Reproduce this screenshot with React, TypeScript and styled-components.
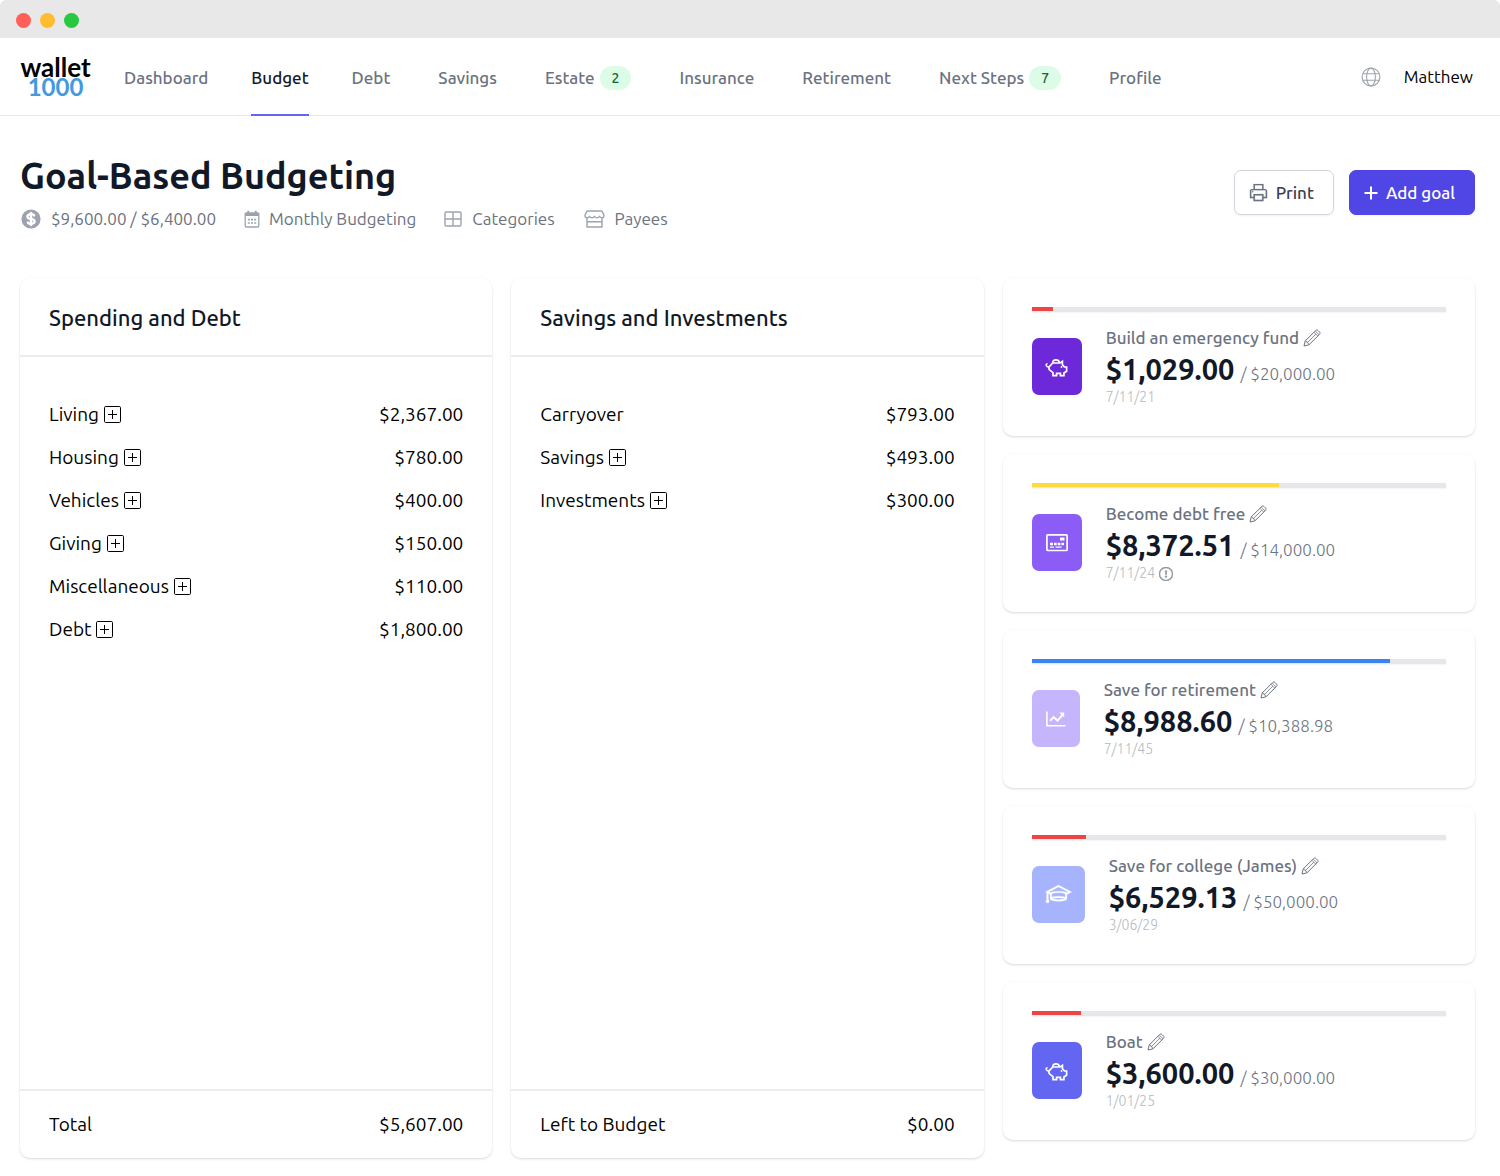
import React from "react";
import styled, { createGlobalStyle } from "styled-components";
import { LiaGraduationCapSolid, LiaPrintSolid } from "react-icons/lia";
import { BsExclamationCircle } from "react-icons/bs";
import { HiCurrencyDollar } from "react-icons/hi";

const Global = createGlobalStyle`
  *, *::before, *::after { box-sizing: border-box; }
  body {
    margin: 0;
    background: #fff;
    color: #000;
    font-family: Ubuntu, "Open Sans", "Noto Sans", sans-serif;
    font-size: 19px;
    line-height: 29px;
  }
  button { font: inherit; color: inherit; background: none; border: 0; padding: 0; cursor: pointer; }
  svg { display: block; flex: none; }
  a { color: inherit; text-decoration: none; }
  h1, h2, h3, p, ul { margin: 0; padding: 0; }
`;

/* ---------- icons ---------- */

const GlobeIcon = () => (
  <svg width="20" height="20" viewBox="0 0 20 20" fill="none" stroke="currentColor" strokeWidth="1.1" aria-hidden="true">
    <circle cx="10" cy="10" r="8.9" />
    <ellipse cx="10" cy="10" rx="4.4" ry="8.9" />
    <path d="M1.8 6.8h16.4M1.8 13.2h16.4" />
  </svg>
);

const PlusIcon = () => (
  <svg width="14" height="14" viewBox="0 0 14 14" fill="none" stroke="currentColor" strokeWidth="2" aria-hidden="true">
    <path d="M7 0.5v13M0.5 7h13" />
  </svg>
);

const PlusSquareIcon = () => (
  <svg width="17" height="17" viewBox="0 0 17 17" fill="none" stroke="currentColor" aria-hidden="true">
    <rect x="0.5" y="0.5" width="16" height="16" rx="1.2" />
    <path d="M8.5 4v9M4 8.5h9" />
  </svg>
);

const CalendarIcon = () => (
  <svg width="16" height="18" viewBox="0 0 16 18" fill="none" stroke="currentColor" aria-hidden="true">
    <rect x="1.2" y="3" width="13.6" height="14" rx="1" strokeWidth="1.3" />
    <path d="M1 4.5h14" strokeWidth="3" />
    <path d="M4.3 0.8v3M11.7 0.8v3" strokeWidth="1.8" />
    <path d="M3.8 9.6h2M7 9.6h2M10.2 9.6h2M3.8 13h2M7 13h2M10.2 13h2" strokeWidth="1.7" />
  </svg>
);

const GridIcon = () => (
  <svg width="19" height="16" viewBox="0 0 19 16" fill="none" stroke="currentColor" strokeWidth="1.4" aria-hidden="true">
    <rect x="1" y="1" width="16" height="14" rx="1.2" />
    <path d="M9 1v14M1 8h16" />
  </svg>
);

const StoreIcon = () => (
  <svg width="21" height="18" viewBox="0 0 21 18" fill="none" stroke="currentColor" strokeWidth="1.4" strokeLinejoin="round" aria-hidden="true">
    <path d="M4 1h13q1 0 1.500 1L19.800 4.600c.6 1.700-.3 3.200-1.700 3.200-1.100 0-1.900-.5-2.600-1.500-.7 1-1.500 1.500-2.500 1.500s-1.800-.5-2.500-1.500c-.7 1-1.500 1.500-2.500 1.500s-1.800-.5-2.500-1.500c-.7 1-1.500 1.500-2.600 1.500C1.500 7.800.6 6.300 1.200 4.600L2.500 2Q3 1 4 1z" />
    <path d="M3 8v9h15V8M3 11.800h15" />
  </svg>
);

const PencilIcon = () => (
  <svg width="18" height="18" viewBox="0 0 18 18" fill="none" stroke="currentColor" strokeWidth="1" strokeLinejoin="round" aria-hidden="true">
    <path d="M1 17l1.200-5L12.700 1.500c.7-.7 1.600-.7 2.300 0l1.500 1.500c.7.7.7 1.600 0 2.300L6 15.800z" />
    <path d="M2.200 12c1.200-.2 1.900.4 1.900 1.900 1.300 0 2 .700 1.900 1.900M10.900 3.300l3.800 3.800M12.200 2l3.800 3.800M4.100 13.900l8.700-8.700" strokeWidth="0.8" />
  </svg>
);

const PiggyIcon = () => (
  <svg width="23" height="20" viewBox="0 0 23 20" fill="none" stroke="currentColor" strokeWidth="1.7" aria-hidden="true">
    <path d="M3.800 10.200L7.800 6h7.400l2.200-1.600v3.200l2 2.400h2.200v4.300l-2.700 1.600v2.800h-3.500v-2.300h-3.800v2.300H8v-3L4.200 12.600z" />
    <path d="M7.500 5.600a3.600 3.600 0 0 1 7 0" />
    <path d="M2.600 6.700C.4 6.900.4 9.700 3.800 10.200" strokeWidth="1.400" />
    <circle cx="16.500" cy="10" r="0.9" fill="currentColor" stroke="none" />
  </svg>
);

const CardIcon = () => (
  <svg width="22" height="18" viewBox="0 0 22 18" fill="none" stroke="currentColor" aria-hidden="true">
    <rect x="0.9" y="0.9" width="20.2" height="15.6" rx="0.8" strokeWidth="1.7" />
    <path d="M14 5h4.500" strokeWidth="3" />
    <path d="M4 10h3M8 10h2.700M11.700 10h2.700M15.400 10H18" strokeWidth="2.4" />
    <path d="M4 13.200h4M9.500 13.200h6" strokeWidth="1.2" />
  </svg>
);

const ChartIcon = () => (
  <svg width="20" height="16" viewBox="0 0 20 16" fill="none" stroke="currentColor" strokeWidth="1.6" aria-hidden="true">
    <path d="M0.900 0.500v14.200h18.600" />
    <path d="M4 9.800l3.600-3.600 4 3.400L16.300 4.200" strokeWidth="2" />
    <path d="M13.200 1.600h5v5z" fill="currentColor" stroke="none" />
  </svg>
);

/* ---------- window and navigation ---------- */

const TitleBar = styled.div`
  display: flex;
  align-items: center;
  gap: 9px;
  height: 38px;
  padding: 2px 16px 0;
  background: #e8e8e8;
  border-radius: 6px 6px 0 0;
`;

const Light = styled.span<{ $color: string }>`
  width: 15px;
  height: 15px;
  border-radius: 50%;
  background: ${(p) => p.$color};
`;

const Nav = styled.header`
  display: flex;
  align-items: stretch;
  height: 78px;
  padding: 0 27px 0 20px;
  border-bottom: 1px solid #e5e7eb;
`;

const Logo = styled.a`
  display: flex;
  flex-direction: column;
  align-items: center;
  justify-content: center;
  width: 71px;
  margin-right: 33px;
  font: 700 26px/19px Lato, "Open Sans", sans-serif;
`;

const LogoNumber = styled.span`
  font-size: 24px;
  color: #4299e1;
`;

const Tabs = styled.nav`
  display: flex;
  flex: 1;
  gap: 43px;
`;

const Tab = styled.a<{ $active?: boolean }>`
  display: flex;
  align-items: center;
  padding-top: 3px;
  margin-bottom: -1px;
  font-size: 17px;
  font-weight: 500;
  color: ${(p) => (p.$active ? "#111827" : "#6b7280")};
  border-bottom: 2px solid ${(p) => (p.$active ? "#6366f1" : "transparent")};
`;

const TabExtra = styled.span`
  display: flex;
  margin-left: 5px;
`;

const Badge = styled.span`
  margin-right: 5px;
  padding: 0 12px;
  border-radius: 12px;
  background: #dcfce7;
  color: #166534;
  font-size: 14px;
  line-height: 24px;
`;

const UserArea = styled.div`
  display: flex;
  align-items: center;
  gap: 23px;
  font-size: 17px;
`;

const GlobeButton = styled.button`
  color: #9ca3af;
`;

/* ---------- page header ---------- */

const Page = styled.main`
  padding: 38px 25px 17px 20px;
`;

const PageHeader = styled.div`
  display: flex;
  align-items: center;
  justify-content: space-between;
  margin-bottom: 47px;
`;

const Title = styled.h1`
  margin-bottom: 10px;
  font-size: 36px;
  line-height: 43px;
  font-weight: 700;
  color: #111827;
`;

const MetaList = styled.ul`
  display: flex;
  gap: 28px;
  list-style: none;
  font-size: 17px;
  line-height: 24px;
  color: #6b7280;
`;

const MetaItem = styled.li`
  display: flex;
`;

const MetaLink = styled.a`
  display: flex;
  align-items: center;
  gap: 9px;
`;

const MetaIcon = styled.span<{ $width: number }>`
  display: flex;
  justify-content: center;
  width: ${(p) => p.$width}px;
  color: #9ca3af;
`;

const Actions = styled.div`
  display: flex;
  gap: 15px;
`;

const Button = styled.button<{ $primary?: boolean }>`
  display: flex;
  align-items: center;
  gap: 8px;
  height: 45px;
  padding: 0 19px 0 14px;
  border: 1px solid ${(p) => (p.$primary ? "#4f46e5" : "#d1d5db")};
  border-radius: 7px;
  background: ${(p) => (p.$primary ? "#4f46e5" : "#fff")};
  color: ${(p) => (p.$primary ? "#fff" : "#374151")};
  font-size: 17px;
  font-weight: 500;
  box-shadow: 0 1px 2px rgba(0, 0, 0, 0.05);
`;

const PrintGlyph = styled.span`
  display: flex;
  margin: 0 -2px;
  color: #6b7280;
`;

/* ---------- columns ---------- */

const Columns = styled.div`
  display: grid;
  grid-template-columns: repeat(3, minmax(0, 1fr));
  gap: 19px;
`;

const Card = styled.section`
  display: flex;
  flex-direction: column;
  background: #fff;
  border-radius: 10px;
  box-shadow: 0 1px 3px rgba(0, 0, 0, 0.1), 0 1px 2px rgba(0, 0, 0, 0.06);
`;

const CardHeader = styled.h2`
  padding: 26px 29px 23px;
  border-bottom: 2px solid #ebecee;
  font-size: 22px;
  line-height: 28px;
  font-weight: 500;
  color: #111827;
`;

const CardBody = styled.div`
  flex: 1;
  padding: 36px 29px;
`;

const BudgetTable = styled.table`
  width: 100%;
  border-collapse: collapse;
`;

const NameCell = styled.th`
  height: 43px;
  padding: 0;
  font-weight: 400;
  text-align: left;
`;

const NameGroup = styled.span`
  display: flex;
  align-items: center;
  gap: 5px;
`;

const AmountCell = styled.td`
  padding: 0;
  text-align: right;
`;

const CardFooter = styled.div`
  display: flex;
  justify-content: space-between;
  padding: 19px 29px;
  border-top: 2px solid #ebecee;
`;

/* ---------- goals ---------- */

const GoalCard = styled(Card)`
  gap: 14px;
  padding: 29px;
  margin-bottom: 18px;
`;

const Track = styled.div`
  height: 5px;
  background: #e5e7eb;
  box-shadow: 0 1px 2px rgba(0, 0, 0, 0.05);
`;

const Fill = styled.div<{ $color: string }>`
  height: 4px;
  background: ${(p) => p.$color};
`;

const GoalRow = styled.div`
  display: flex;
  align-items: center;
  gap: 24px;
`;

const GoalIcon = styled.div<{ $color: string; $width: number }>`
  display: flex;
  align-items: center;
  justify-content: center;
  width: ${(p) => p.$width}px;
  height: 57px;
  border-radius: 7px;
  background: ${(p) => p.$color};
  color: #fff;
`;

const GoalName = styled.h3`
  display: flex;
  align-items: center;
  gap: 4px;
  font-size: 17px;
  line-height: 24px;
  font-weight: 500;
  color: #6b7280;
`;

const GoalAmount = styled.p`
  display: flex;
  align-items: baseline;
  gap: 6px;
  font-size: 29px;
  line-height: 38px;
  font-weight: 700;
  color: #111827;
`;

const GoalTarget = styled.span`
  font-size: 17px;
  line-height: 24px;
  font-weight: 300;
  color: #6b7280;
`;

const GoalDate = styled.p`
  display: flex;
  align-items: center;
  gap: 4px;
  font-size: 14px;
  line-height: 19px;
  font-weight: 300;
  color: #b4b9c1;
`;

const Warning = styled.span`
  display: flex;
  color: #8b919c;
`;

/* ---------- data ---------- */

const tabs = [
  { label: "Dashboard" },
  { label: "Budget", active: true },
  { label: "Debt", extra: true },
  { label: "Savings", extra: true },
  { label: "Estate", extra: true, count: 2 },
  { label: "Insurance", extra: true },
  { label: "Retirement", extra: true },
  { label: "Next Steps", extra: true, count: 7 },
  { label: "Profile" },
];

const meta = [
  { label: "$9,600.00 / $6,400.00", width: 22, icon: <HiCurrencyDollar size={24} /> },
  { label: "Monthly Budgeting", width: 16, icon: <CalendarIcon /> },
  { label: "Categories", width: 19, icon: <GridIcon /> },
  { label: "Payees", width: 23, icon: <StoreIcon /> },
];

type Line = { name: string; amount: string; fixed?: boolean };

const spending: Line[] = [
  { name: "Living", amount: "$2,367.00" },
  { name: "Housing", amount: "$780.00" },
  { name: "Vehicles", amount: "$400.00" },
  { name: "Giving", amount: "$150.00" },
  { name: "Miscellaneous", amount: "$110.00" },
  { name: "Debt", amount: "$1,800.00" },
];

const savings: Line[] = [
  { name: "Carryover", amount: "$793.00", fixed: true },
  { name: "Savings", amount: "$493.00" },
  { name: "Investments", amount: "$300.00" },
];

const goals = [
  { name: "Build an emergency fund", saved: 1029, target: 20000, date: "7/11/21", bar: "#ef4444", color: "#6d28d9", width: 50, icon: <PiggyIcon /> },
  { name: "Become debt free", saved: 8372.51, target: 14000, date: "7/11/24", late: true, bar: "#fddc3c", color: "#8b5cf6", width: 50, icon: <CardIcon /> },
  { name: "Save for retirement", saved: 8988.6, target: 10388.98, date: "7/11/45", bar: "#3b82f6", color: "#c4b5fd", width: 48, icon: <ChartIcon /> },
  { name: "Save for college (James)", saved: 6529.13, target: 50000, date: "3/06/29", bar: "#ef4444", color: "#a5b4fc", width: 53, icon: <LiaGraduationCapSolid size={27} strokeWidth={0.3} /> },
  { name: "Boat", saved: 3600, target: 30000, date: "1/01/25", bar: "#ef4444", color: "#6366f1", width: 50, icon: <PiggyIcon /> },
];

const money = (n: number) =>
  "$" + n.toLocaleString("en-US", { minimumFractionDigits: 2, maximumFractionDigits: 2 });

function BudgetCard(props: { title: string; lines: Line[]; totalLabel: string; total: string }) {
  return (
    <Card>
      <CardHeader>{props.title}</CardHeader>
      <CardBody>
        <BudgetTable>
          <tbody>
            {props.lines.map((line) => (
              <tr key={line.name}>
                <NameCell scope="row">
                  <NameGroup>
                    {line.name}
                    {!line.fixed && (
                      <button aria-label={`Expand ${line.name}`}>
                        <PlusSquareIcon />
                      </button>
                    )}
                  </NameGroup>
                </NameCell>
                <AmountCell>{line.amount}</AmountCell>
              </tr>
            ))}
          </tbody>
        </BudgetTable>
      </CardBody>
      <CardFooter>
        <span>{props.totalLabel}</span>
        <span>{props.total}</span>
      </CardFooter>
    </Card>
  );
}

export default function App() {
  return (
    <>
      <Global />
      <TitleBar>
        <Light $color="#ff5f57" />
        <Light $color="#febc2e" />
        <Light $color="#28c840" />
      </TitleBar>
      <Nav>
        <Logo href="#">
          <span>wallet</span>
          <LogoNumber>1000</LogoNumber>
        </Logo>
        <Tabs>
          {tabs.map((tab) => (
            <Tab key={tab.label} href="#" $active={tab.active}>
              {tab.label}
              {tab.extra && <TabExtra>{tab.count && <Badge>{tab.count}</Badge>}</TabExtra>}
            </Tab>
          ))}
        </Tabs>
        <UserArea>
          <GlobeButton aria-label="Language">
            <GlobeIcon />
          </GlobeButton>
          <button>Matthew</button>
        </UserArea>
      </Nav>
      <Page>
        <PageHeader>
          <div>
            <Title>Goal-Based Budgeting</Title>
            <MetaList>
              {meta.map((item) => (
                <MetaItem key={item.label}>
                  <MetaLink href="#">
                    <MetaIcon $width={item.width}>{item.icon}</MetaIcon>
                    {item.label}
                  </MetaLink>
                </MetaItem>
              ))}
            </MetaList>
          </div>
          <Actions>
            <Button>
              <PrintGlyph>
                <LiaPrintSolid size={23} strokeWidth={0.2} />
              </PrintGlyph>
              Print
            </Button>
            <Button $primary>
              <PlusIcon />
              Add goal
            </Button>
          </Actions>
        </PageHeader>
        <Columns>
          <BudgetCard title="Spending and Debt" lines={spending} totalLabel="Total" total="$5,607.00" />
          <BudgetCard title="Savings and Investments" lines={savings} totalLabel="Left to Budget" total="$0.00" />
          <div>
            {goals.map((goal) => (
              <GoalCard key={goal.name}>
                <Track role="progressbar" aria-label={goal.name} aria-valuenow={goal.saved} aria-valuemax={goal.target}>
                  <Fill $color={goal.bar} style={{ width: `${(goal.saved / goal.target) * 100}%` }} />
                </Track>
                <GoalRow>
                  <GoalIcon $color={goal.color} $width={goal.width}>
                    {goal.icon}
                  </GoalIcon>
                  <div>
                    <GoalName>
                      {goal.name}
                      <button aria-label={`Edit ${goal.name}`}>
                        <PencilIcon />
                      </button>
                    </GoalName>
                    <GoalAmount>
                      {money(goal.saved)}
                      <GoalTarget>/ {money(goal.target)}</GoalTarget>
                    </GoalAmount>
                    <GoalDate>
                      {goal.date}
                      {goal.late && (
                        <Warning>
                          <BsExclamationCircle size={14} strokeWidth={0.6} />
                        </Warning>
                      )}
                    </GoalDate>
                  </div>
                </GoalRow>
              </GoalCard>
            ))}
          </div>
        </Columns>
      </Page>
    </>
  );
}
